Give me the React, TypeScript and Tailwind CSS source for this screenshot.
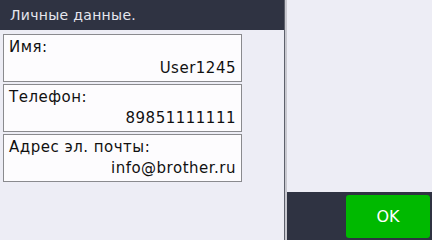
const fields = [
  { label: "Имя:", value: "User1245" },
  { label: "Телефон:", value: "89851111111" },
  { label: "Адрес эл. почты:", value: "info@brother.ru" },
]

export default function App() {
  return (
    <div
      className="flex h-[240px] w-[432px] overflow-hidden bg-[#ededf5] text-[#111]"
      style={{ fontFamily: '"DejaVu Sans", sans-serif' }}
    >
      <div className="flex w-[284px] flex-col">
        <div className="flex h-[30px] items-center bg-[#2f3342] pl-[10px] pt-px text-[14px] tracking-[0.3px] text-[#e6e6ee]">
          Личные данные.
        </div>
        <div className="flex flex-col gap-[2px] pl-[3px] pt-[4px]">
          {fields.map((f) => (
            <div
              key={f.label}
              className="flex h-[48px] w-[239px] flex-col border border-[#8a8a8e] bg-[#fdfcfe] px-[5px] pt-[2px] text-[15px] leading-[21px] tracking-[0.5px]"
            >
              <span>{f.label}</span>
              <span className="self-end">{f.value}</span>
            </div>
          ))}
        </div>
      </div>
      <div className="flex">
        <div className="w-px bg-[#5d606b]" />
        <div className="w-[2px] bg-[#c8c8cf]" />
      </div>
      <div className="flex flex-1 flex-col">
        <div className="flex-1" />
        <div className="flex h-[48px] items-start justify-end bg-[#2f3342] pr-[2px] pt-[3px]">
          <button className="flex h-[43px] w-[84px] items-center justify-center rounded-[3px] bg-[#00b900] text-[16px] text-white">
            OK
          </button>
        </div>
      </div>
    </div>
  )
}
